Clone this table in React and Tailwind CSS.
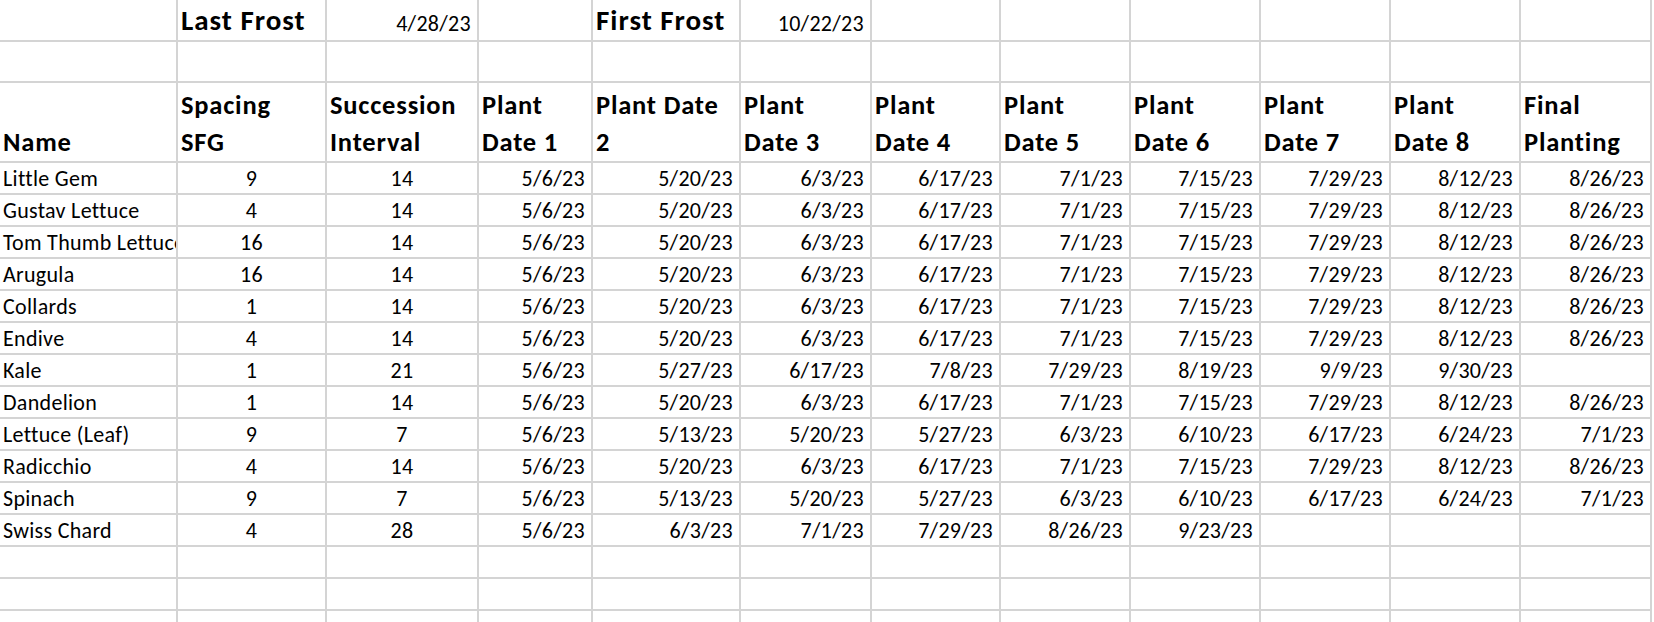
import React from 'react'

const same = ['5/6/23', '5/20/23', '6/3/23', '6/17/23', '7/1/23', '7/15/23', '7/29/23', '8/12/23', '8/26/23']
const weekly = ['5/6/23', '5/13/23', '5/20/23', '5/27/23', '6/3/23', '6/10/23', '6/17/23', '6/24/23', '7/1/23']

const rows = [
  ['Little Gem', '9', '14', ...same],
  ['Gustav Lettuce', '4', '14', ...same],
  ['Tom Thumb Lettuce', '16', '14', ...same],
  ['Arugula', '16', '14', ...same],
  ['Collards', '1', '14', ...same],
  ['Endive', '4', '14', ...same],
  ['Kale', '1', '21', '5/6/23', '5/27/23', '6/17/23', '7/8/23', '7/29/23', '8/19/23', '9/9/23', '9/30/23', ''],
  ['Dandelion', '1', '14', ...same],
  ['Lettuce (Leaf)', '9', '7', ...weekly],
  ['Radicchio', '4', '14', ...same],
  ['Spinach', '9', '7', ...weekly],
  ['Swiss Chard', '4', '28', '5/6/23', '6/3/23', '7/1/23', '7/29/23', '8/26/23', '9/23/23', '', '', ''],
]

const headers = [
  ['Name'],
  ['Spacing', 'SFG'],
  ['Succession', 'Interval'],
  ['Plant', 'Date 1'],
  ['Plant Date', '2'],
  ['Plant', 'Date 3'],
  ['Plant', 'Date 4'],
  ['Plant', 'Date 5'],
  ['Plant', 'Date 6'],
  ['Plant', 'Date 7'],
  ['Plant', 'Date 8'],
  ['Final', 'Planting'],
]

const cell = 'border-r-2 border-b-2 border-[#d4d4d4] overflow-hidden whitespace-nowrap'

function Cell({ children, align = 'left', className = '' }) {
  const alignment = align === 'right' ? 'justify-end pr-[6px]' : align === 'center' ? 'justify-center' : 'justify-start pl-[3px]'
  return <div className={`${cell} flex items-end ${alignment} ${className}`}>{children}</div>
}

export default function App() {
  return (
    <div className="h-[622px] w-[1654px] overflow-hidden bg-white text-black" style={{ fontFamily: 'Carlito, Calibri, Lato, sans-serif' }}>
      <div className="grid grid-cols-[178px_149px_152px_114px_148px_131px_129px_130px_130px_130px_130px_131px] grid-rows-[42px_41px_80px_repeat(15,32px)]">
        {/* frost dates */}
        <Cell />
        <Cell className="pb-[4px] text-[29px] font-bold leading-[32px] tracking-[1px]">Last Frost</Cell>
        <Cell align="right" className="pb-[3px] text-[22px] leading-[26px] tracking-[0.3px]">4/28/23</Cell>
        <Cell />
        <Cell className="pb-[4px] text-[29px] font-bold leading-[32px] tracking-[1px]">First Frost</Cell>
        <Cell align="right" className="pb-[3px] text-[22px] leading-[26px] tracking-[0.3px]">10/22/23</Cell>
        {Array.from({ length: 6 }).map((_, i) => <Cell key={`a${i}`} />)}

        {Array.from({ length: 12 }).map((_, i) => <Cell key={`b${i}`} />)}

        {headers.map((lines) => (
          <div key={lines.join()} className={`${cell} flex flex-col justify-end pl-[3px] text-[26.5px] font-bold leading-[37px] tracking-[0.8px]`}>
            {lines.map((line) => <span key={line}>{line}</span>)}
          </div>
        ))}

        {rows.map((row) => row.map((value, i) => (
          <Cell
            key={`${row[0]}-${i}`}
            align={i === 0 ? 'left' : i < 3 ? 'center' : 'right'}
            className="pb-[1px] text-[22px] leading-[26px] tracking-[0.3px]"
          >
            {value}
          </Cell>
        )))}

        {Array.from({ length: 36 }).map((_, i) => <Cell key={`e${i}`} />)}
      </div>
    </div>
  )
}
